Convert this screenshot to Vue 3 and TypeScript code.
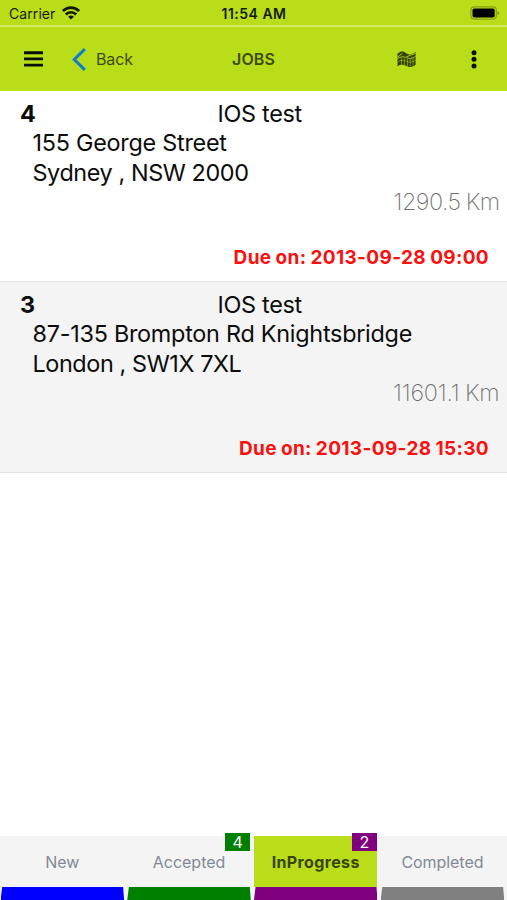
<script setup lang="ts">
interface Job {
  id: number
  title: string
  street: string
  city: string
  distance: string
  due: string
}
interface Tab {
  key: string
  label: string
  count?: number
  active?: boolean
}

const jobs: Job[] = [
  { id: 4, title: 'IOS test', street: '155 George Street', city: 'Sydney , NSW 2000', distance: '1290.5 Km', due: '2013-09-28 09:00' },
  { id: 3, title: 'IOS test', street: '87-135 Brompton Rd Knightsbridge', city: 'London , SW1X 7XL', distance: '11601.1 Km', due: '2013-09-28 15:30' },
]
const tabs: Tab[] = [
  { key: 'new', label: 'New' },
  { key: 'accepted', label: 'Accepted', count: 4 },
  { key: 'progress', label: 'InProgress', count: 2, active: true },
  { key: 'completed', label: 'Completed' },
]
</script>

<template>
  <div class="screen">
    <div class="status">
      <div class="carrier">
        <span>Carrier</span>
        <svg width="18" height="14" viewBox="0 0 18 14" fill="none" stroke="#111700" stroke-width="2.7">
          <path d="M.9 5.1C5.3.5 12.7.5 17.1 5.1" />
          <path d="M3.8 8.5c2.8-3 7.6-3 10.4 0" />
          <path d="M9 13.5 6.1 10.8c1.6-1.6 4.2-1.6 5.8 0z" fill="#111700" stroke="none" />
        </svg>
      </div>
      <div class="time">11:54 AM</div>
      <svg class="battery" width="31" height="14" viewBox="0 0 31 14">
        <rect x=".9" y=".8" width="25.4" height="12.4" rx="3.4" fill="none" stroke="#85a015" stroke-width="1.2" />
        <rect x="2.5" y="2.4" width="22.2" height="9.2" rx="1.8" fill="#000" />
        <path d="M27.3 4.8c2.6.9 2.6 3.5 0 4.4z" fill="#85a015" />
      </svg>
    </div>
    <header class="nav">
      <div class="left">
        <svg class="burger" width="19" height="16" viewBox="0 0 19 16" stroke="#0b0f00" stroke-width="2.9">
          <path d="M0 1.7h19M0 7.9h19M0 14.1h19" />
        </svg>
        <svg class="chevron" width="14" height="23" viewBox="0 0 14 23" fill="none" stroke="#0a7fd0" stroke-width="3">
          <path d="M12.8 1.1 2.3 11.5l10.5 10.4" />
        </svg>
        <span class="back">Back</span>
      </div>
      <h1>JOBS</h1>
      <div class="right">
        <svg class="map" width="19" height="17" viewBox="0 0 19 17" fill="none">
          <path d="M.5 2.6C4-.2 6.4 0 9.3 2.2s5.4 1.4 9.3-1.2v12.8c-3.6 2.6-6.2 2.6-9 1.2s-5.5-2.3-9.1.2z" fill="#354106" />
          <path d="M.4 7.6C4 5.2 7 5.4 9.5 6.7s5.7 1.1 9.1-1.3" stroke="#b9dd18" stroke-width=".8" />
          <path d="M.4 11.2c3.6-2.4 6.6-2.2 9.1-.9s5.7 1.1 9.1-1.1M4.5 6.5v7.5M7.3 6.5v7.5M10.5 7.5v7.5M13.2 7.8v7.5M16 7v7.5" stroke="#b9dd18" stroke-width=".5" />
          <path d="M.4 6.3 5.4 2.3M9.5 5.8 18.4 2.4" stroke="#b9dd18" stroke-width=".9" />
        </svg>
        <svg class="more" width="6" height="19" viewBox="0 0 6 19" fill="#0b0f00">
          <circle cx="3" cy="2.8" r="2.5" /><circle cx="3" cy="9.3" r="2.5" /><circle cx="3" cy="15.9" r="2.5" />
        </svg>
      </div>
    </header>
    <main class="list">
      <article v-for="job in jobs" :key="job.id" class="job" :class="`job-${job.id}`">
        <div class="heading"><b>{{ job.id }}</b><span>{{ job.title }}</span></div>
        <div class="address street">{{ job.street }}</div>
        <div class="address">{{ job.city }}</div>
        <div class="distance">{{ job.distance }}</div>
        <div class="due">Due on: {{ job.due }}</div>
      </article>
    </main>
    <nav class="tabs">
      <div v-for="tab in tabs" :key="tab.key" class="tab" :class="[tab.key, { active: tab.active }]">
        <div class="label">{{ tab.label }}</div>
        <div class="bar"></div>
        <span v-if="tab.count" class="badge">{{ tab.count }}</span>
      </div>
    </nav>
  </div>
</template>

<style>
body { background: #fff; }
</style>

<style scoped>
.screen { width: 507px; height: 900px; display: flex; flex-direction: column; overflow: hidden; background: #fff; font-family: Inter, "Liberation Sans", sans-serif; color: #0c0c0c; }
.screen svg { display: block; flex: none; }
.status { box-sizing: border-box; height: 27px; flex: none; display: grid; grid-template-columns: 1fr auto 1fr; padding: 0 6px 0 9px; background: #b9dd18; border-bottom: 2px solid #d3e968; color: #151b02; }
.carrier { display: flex; gap: 6.5px; font-size: 14px; line-height: 28px; letter-spacing: .08px; }
.carrier svg { margin-top: 6px; }
.time { margin-right: 2px; font-size: 14px; font-weight: 600; line-height: 28px; letter-spacing: .5px; }
.battery { justify-self: end; margin-top: 6px; }
.nav { height: 64px; flex: none; display: grid; grid-template-columns: 1fr auto 1fr; align-items: center; background: #b9dd18; color: #3e4b0b; }
.left { display: flex; align-items: center; padding-left: 24px; }
.chevron { margin-left: 29px; }
.back { margin-left: 10px; font-size: 16px; line-height: 20px; letter-spacing: -.1px; }
h1 { margin: 0; font-size: 16px; line-height: 20px; font-weight: 600; letter-spacing: .1px; }
.right { display: flex; justify-content: flex-end; align-items: center; padding-right: 30px; }
.map { margin-top: 1px; }
.more { margin-left: 55px; }
.list { flex: 1; }
.job { box-sizing: border-box; height: 191px; padding-top: 8px; border-bottom: 1px solid #e2e2e2; font-size: 23.4px; line-height: 29.4px; white-space: nowrap; }
.job-3 { background: #f4f4f4; }
.heading { display: flex; letter-spacing: -.3px; }
.heading b { width: 197.5px; padding-left: 20px; font-weight: 700; }
.address { padding-left: 32.5px; letter-spacing: -.4px; }
.street { letter-spacing: -.26px; }
.distance { padding-right: 7.5px; text-align: right; font-weight: 200; color: #707070; letter-spacing: -.55px; word-spacing: -.8px; }
.job-3 .distance { letter-spacing: -.2px; }
.due { margin-top: 28px; padding-right: 18px; text-align: right; font-size: 19px; line-height: 26px; font-weight: 700; letter-spacing: .35px; word-spacing: -.8px; color: #fb1010; }
.tabs { flex: none; height: 64px; display: grid; grid-template-columns: repeat(4, 123.5px); column-gap: 3.2px; padding-left: .6px; background: #f4f4f4; font-size: 16px; color: #828a94; }
.tab { position: relative; display: flex; flex-direction: column; }
.label { height: 51px; line-height: 52px; text-align: center; }
.completed .label { letter-spacing: -.05px; }
.active .label { background: #b9dd18; color: #37430b; font-weight: 700; letter-spacing: .36px; }
.bar { height: 13px; clip-path: polygon(1.6px 0, 122.5px 0, 100% 100%, 0 100%); }
.new .bar { background: #0000fe; }
.accepted .bar, .accepted .badge { background: #008000; }
.progress .bar, .progress .badge { background: #800080; }
.completed .bar { background: #808080; }
.badge { position: absolute; top: -3px; right: .6px; width: 25px; height: 18px; line-height: 19px; text-align: center; color: #fff; font-size: 16px; }
</style>
